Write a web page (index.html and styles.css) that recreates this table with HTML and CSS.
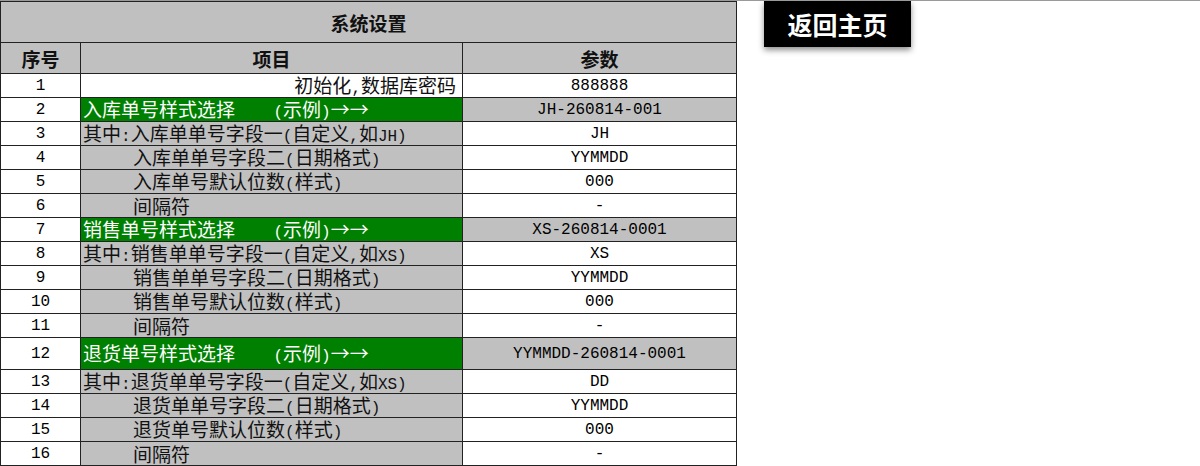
FILE: index.html
```html
<!DOCTYPE html>
<html lang="zh-CN">
<head>
<meta charset="utf-8">
<title>系统设置</title>
<link rel="stylesheet" href="styles.css">
</head>
<body>
<div class="page">
  <table class="sheet">
    <colgroup>
      <col class="c-no">
      <col class="c-item">
      <col class="c-val">
    </colgroup>
    <tr class="r-title"><td colspan="3" class="title">系统设置</td></tr>
    <tr class="r-head"><td class="head">序号</td><td class="head">项目</td><td class="head">参数</td></tr>

    <tr class="r"><td class="no">1</td><td class="item white right">初始化<span class="a">,</span>数据库密码</td><td class="val">888888</td></tr>
    <tr class="r"><td class="no">2</td><td class="item green">入库单号样式选择<span class="a">    (</span>示例<span class="a">)</span>→→</td><td class="val gray">JH-260814-001</td></tr>
    <tr class="r"><td class="no">3</td><td class="item">其中<span class="a">:</span>入库单单号字段一<span class="a">(</span>自定义<span class="a">,</span>如<span class="a">JH)</span></td><td class="val">JH</td></tr>
    <tr class="r"><td class="no">4</td><td class="item indent">入库单单号字段二<span class="a">(</span>日期格式<span class="a">)</span></td><td class="val">YYMMDD</td></tr>
    <tr class="r"><td class="no">5</td><td class="item indent">入库单号默认位数<span class="a">(</span>样式<span class="a">)</span></td><td class="val">000</td></tr>
    <tr class="r"><td class="no">6</td><td class="item indent">间隔符</td><td class="val">-</td></tr>

    <tr class="r"><td class="no">7</td><td class="item green">销售单号样式选择<span class="a">    (</span>示例<span class="a">)</span>→→</td><td class="val gray">XS-260814-0001</td></tr>
    <tr class="r"><td class="no">8</td><td class="item">其中<span class="a">:</span>销售单单号字段一<span class="a">(</span>自定义<span class="a">,</span>如<span class="a">XS)</span></td><td class="val">XS</td></tr>
    <tr class="r"><td class="no">9</td><td class="item indent">销售单单号字段二<span class="a">(</span>日期格式<span class="a">)</span></td><td class="val">YYMMDD</td></tr>
    <tr class="r"><td class="no">10</td><td class="item indent">销售单号默认位数<span class="a">(</span>样式<span class="a">)</span></td><td class="val">000</td></tr>
    <tr class="r"><td class="no">11</td><td class="item indent">间隔符</td><td class="val">-</td></tr>

    <tr class="r tall"><td class="no">12</td><td class="item green">退货单号样式选择<span class="a">    (</span>示例<span class="a">)</span>→→</td><td class="val gray">YYMMDD-260814-0001</td></tr>
    <tr class="r"><td class="no">13</td><td class="item">其中<span class="a">:</span>退货单单号字段一<span class="a">(</span>自定义<span class="a">,</span>如<span class="a">XS)</span></td><td class="val">DD</td></tr>
    <tr class="r"><td class="no">14</td><td class="item indent">退货单单号字段二<span class="a">(</span>日期格式<span class="a">)</span></td><td class="val">YYMMDD</td></tr>
    <tr class="r"><td class="no">15</td><td class="item indent">退货单号默认位数<span class="a">(</span>样式<span class="a">)</span></td><td class="val">000</td></tr>
    <tr class="r"><td class="no">16</td><td class="item indent">间隔符</td><td class="val">-</td></tr>
  </table>
  <div class="home">返回主页</div>
</div>
</body>
</html>
```
FILE: styles.css
```css
html, body {
  margin: 0;
  padding: 0;
  background: #fff;
}
body {
  border-top: 1px solid #9a9a9a;
  font-family: "Noto Sans CJK SC", sans-serif;
  font-size: 19px;
  color: #111;
}
.page {
  display: flex;
  align-items: flex-start;
}
.sheet {
  border-collapse: collapse;
  table-layout: fixed;
  width: 736px;
  flex: none;
}
.c-no { width: 80px; }
.c-item { width: 382px; }
.c-val { width: 274px; }

.sheet td {
  border: 1px solid #222;
  padding: 0 2px;
  white-space: pre;
  line-height: 19px;
  vertical-align: middle;
}
.r-title { height: 41px; }
.r-head { height: 31px; }
.r { height: 24px; }
.r.tall { height: 32px; }

.title {
  background: #c0c0c0;
  text-align: center;
  font-weight: bold;
  padding-bottom: 3px;
}
.head {
  background: #c0c0c0;
  text-align: center;
  font-weight: bold;
}
.sheet td.no {
  text-align: center;
  background: #fff;
  font-family: "Liberation Mono", monospace;
  font-size: 16px;
  color: #000;
  padding-top: 2px;
}
.item {
  background: #c0c0c0;
  text-align: left;
}
.item.white { background: #fff; }
.sheet td.right { text-align: right; padding-right: 6px; }
.item.green {
  background: #008000;
  color: #fff;
}
.sheet td.indent { padding-left: 52px; }
.sheet td.val {
  text-align: center;
  background: #fff;
  font-family: "Liberation Mono", monospace;
  font-size: 16px;
  color: #000;
  padding-top: 2px;
}
.sheet td.val.gray { background: #c0c0c0; }
.a {
  font-family: "Liberation Mono", monospace;
  font-size: 16px;
  line-height: 1;
}
.home {
  flex: none;
  margin-left: 27px;
  width: 147px;
  height: 46px;
  background: #000;
  color: #fff;
  font-weight: bold;
  font-size: 25px;
  line-height: 1;
  display: flex;
  align-items: center;
  justify-content: center;
  box-shadow: 0 3px 6px rgba(0, 0, 0, 0.45);
}
```
